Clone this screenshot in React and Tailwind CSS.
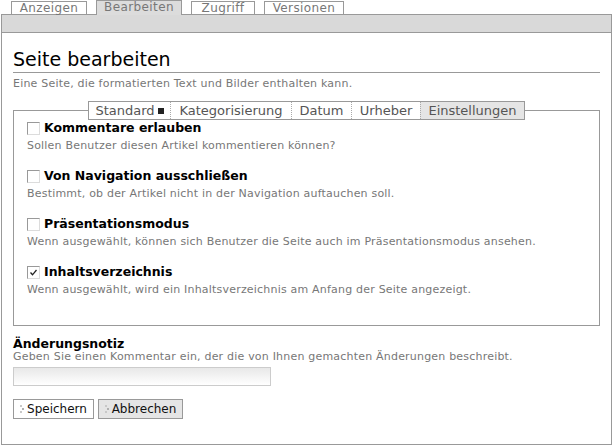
import React from "react";

const font = { fontFamily: '"DejaVu Sans", Verdana, sans-serif' };

function Checkbox({ checked }) {
  return (
    <span className="inline-flex items-center justify-center w-[13px] h-[13px] border border-t-[#999] border-l-[#999] border-r-[#dcdcdc] border-b-[#dcdcdc] bg-white shrink-0">
      {checked && (
        <svg width="9" height="9" viewBox="0 0 9 9">
          <path d="M1.5 4.5 L3.5 6.8 L7.5 2" stroke="#222" strokeWidth="1.3" fill="none" />
        </svg>
      )}
    </span>
  );
}

function Dots() {
  return (
    <svg width="4" height="9" viewBox="0 0 4 9" className="mr-[3px]">
      <rect x="0" y="0" width="2" height="2" fill="#c8c8c8" />
      <rect x="2" y="3" width="2" height="2" fill="#b0b0b0" />
      <rect x="0" y="6" width="2" height="2" fill="#c8c8c8" />
    </svg>
  );
}

const options = [
  { label: "Kommentare erlauben", desc: "Sollen Benutzer diesen Artikel kommentieren können?" },
  { label: "Von Navigation ausschließen", desc: "Bestimmt, ob der Artikel nicht in der Navigation auftauchen soll." },
  { label: "Präsentationsmodus", desc: "Wenn ausgewählt, können sich Benutzer die Seite auch im Präsentationsmodus ansehen." },
  { label: "Inhaltsverzeichnis", desc: "Wenn ausgewählt, wird ein Inhaltsverzeichnis am Anfang der Seite angezeigt.", checked: true },
];

export default function App() {
  return (
    <div className="w-[612px] h-[445px] bg-white text-[#111] overflow-hidden" style={font}>
      {/* top tabs */}
      <div className="flex items-end gap-[9px] pl-[11px] h-[14px]">
        <div className="w-[76px] h-[13px] bg-white border border-b-0 border-[#999] text-[12px] leading-[12px] text-center tracking-[0.4px] text-[#777]">Anzeigen</div>
        <div className="relative z-10 w-[86px] h-[15px] -mb-px bg-[#dcdcdc] border border-b-0 border-[#999] text-[12px] leading-[13px] text-center tracking-[0.4px] text-[#777]">Bearbeiten</div>
        <div className="w-[64px] h-[13px] bg-white border border-b-0 border-[#999] text-[12px] leading-[12px] text-center tracking-[0.4px] text-[#777]">Zugriff</div>
        <div className="w-[80px] h-[13px] bg-white border border-b-0 border-[#999] text-[12px] leading-[12px] text-center tracking-[0.4px] text-[#777]">Versionen</div>
      </div>

      {/* content box */}
      <div className="ml-px w-[611px] h-[431px] border border-[#999]">
        <div className="h-[18px] bg-[#d9d9d9] border-b border-[#999]" />
        <div className="px-[11px]">
          <h1 className="mt-[15px] text-[19px] leading-[22px] pb-[2px] border-b border-[#999] text-[#000]">Seite bearbeiten</h1>
          <p className="mt-[4px] text-[11px] leading-[14px] tracking-[0.2px] text-[#777]">Eine Seite, die formatierten Text und Bilder enthalten kann.</p>

          {/* fieldset */}
          <div className="mt-[19px] h-[216px] border border-[#999]">
            <div className="flex justify-center -mt-[10px]">
              <div className="flex h-[19px] border border-[#999] bg-white text-[13px] leading-[17px] text-[#555]">
                <div className="w-[81px] flex items-center justify-center">
                  Standard<span className="ml-[3px] w-[6px] h-[6px] bg-[#222]" />
                </div>
                <div className="w-[121px] text-center border-l border-dotted border-[#aaa]">Kategorisierung</div>
                <div className="w-[60px] text-center border-l border-dotted border-[#aaa]">Datum</div>
                <div className="w-[69px] text-center border-l border-dotted border-[#aaa]">Urheber</div>
                <div className="w-[104px] text-center bg-[#e5e5e5] border-l border-dotted border-[#aaa]">Einstellungen</div>
              </div>
            </div>

            <div className="pl-[13px] flex flex-col gap-[14px]">
              {options.map((o) => (
                <div key={o.label}>
                  <div className="flex items-center gap-[4px] h-[16px]">
                    <Checkbox checked={o.checked} />
                    <span className="text-[12.5px] font-bold text-[#000]">{o.label}</span>
                  </div>
                  <p className="mt-[2px] text-[11px] leading-[16px] tracking-[0.2px] text-[#777]">{o.desc}</p>
                </div>
              ))}
            </div>
          </div>

          <div className="mt-[11px] text-[12.5px] leading-[14px] font-bold text-[#000]">Änderungsnotiz</div>
          <p className="text-[11px] leading-[12px] tracking-[0.2px] text-[#777]">Geben Sie einen Kommentar ein, der die von Ihnen gemachten Änderungen beschreibt.</p>
          <div className="mt-[4px] w-[258px] h-[19px] border border-[#ccc] bg-gradient-to-b from-[#e8e8e8] to-white" />

          <div className="mt-[13px] flex gap-[4px]">
            <button className="flex items-center justify-center w-[81px] h-[20px] border border-[#999] bg-white text-[12px] text-[#111]">
              <Dots />Speichern
            </button>
            <button className="flex items-center justify-center w-[85px] h-[20px] border border-[#999] bg-[#e5e5e5] text-[12px] text-[#111]">
              <Dots />Abbrechen
            </button>
          </div>
        </div>
      </div>
    </div>
  );
}
